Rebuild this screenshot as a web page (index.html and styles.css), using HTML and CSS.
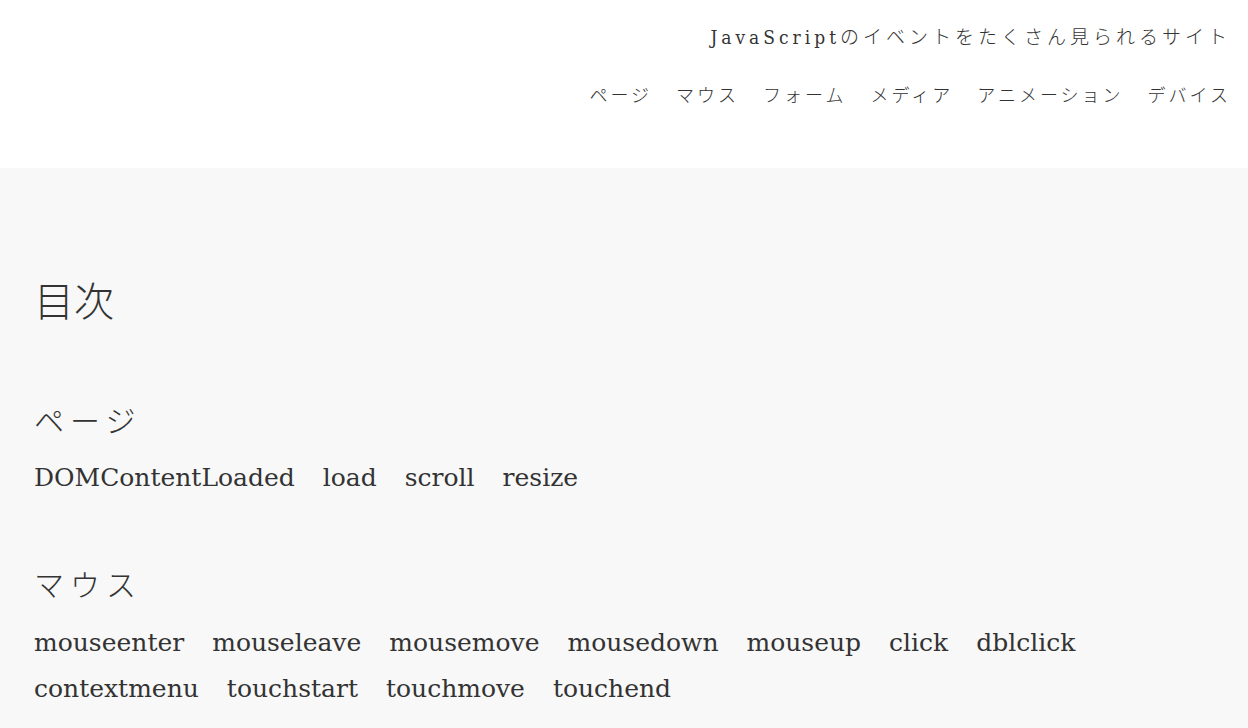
FILE: index.html
```html
<!DOCTYPE html>
<html lang="ja">
<head>
<meta charset="utf-8">
<title>JavaScriptのイベントをたくさん見られるサイト</title>
<link rel="stylesheet" href="styles.css">
</head>
<body>
<header class="site-header">
  <p class="site-title">JavaScriptのイベントをたくさん見られるサイト</p>
  <nav class="global-nav">
    <a href="#">ページ</a>
    <a href="#">マウス</a>
    <a href="#">フォーム</a>
    <a href="#">メディア</a>
    <a href="#">アニメーション</a>
    <a href="#">デバイス</a>
  </nav>
</header>
<main class="content">
  <h1 class="toc-title">目次</h1>
  <section class="toc-section">
    <h2 class="toc-heading">ページ</h2>
    <ul class="toc-list">
      <li><a href="#">DOMContentLoaded</a></li>
      <li><a href="#">load</a></li>
      <li><a href="#">scroll</a></li>
      <li><a href="#">resize</a></li>
    </ul>
  </section>
  <section class="toc-section">
    <h2 class="toc-heading">マウス</h2>
    <ul class="toc-list">
      <li><a href="#">mouseenter</a></li>
      <li><a href="#">mouseleave</a></li>
      <li><a href="#">mousemove</a></li>
      <li><a href="#">mousedown</a></li>
      <li><a href="#">mouseup</a></li>
      <li><a href="#">click</a></li>
      <li><a href="#">dblclick</a></li>
      <li><a href="#">contextmenu</a></li>
      <li><a href="#">touchstart</a></li>
      <li><a href="#">touchmove</a></li>
      <li><a href="#">touchend</a></li>
    </ul>
  </section>
</main>
</body>
</html>
```
FILE: styles.css
```css
html, body {
  margin: 0;
  padding: 0;
}
body {
  font-family: "DejaVu Serif", "Noto Sans CJK JP", serif;
  color: #333;
  background: #f8f8f8;
}
a {
  color: inherit;
  text-decoration: none;
}
.site-header {
  background: #fff;
  height: 168px;
  box-sizing: border-box;
  padding: 22px 17px 0 0;
  display: flex;
  flex-direction: column;
  align-items: flex-end;
}
.site-title {
  margin: 0;
  font-family: "DejaVu Serif Condensed", "DejaVu Serif", "Noto Sans CJK JP", serif;
  font-size: 19px;
  line-height: 30px;
  letter-spacing: 4px;
  font-weight: 300;
}
.global-nav {
  margin-top: 29px;
  display: flex;
  gap: 24px;
  font-size: 18px;
  line-height: 30px;
  letter-spacing: 3px;
  font-weight: 300;
}
.content {
  padding: 104px 34px 40px;
}
.toc-title {
  margin: 0;
  font-size: 40px;
  font-weight: 300;
  line-height: 60px;
}
.toc-section {
  margin-top: 70px;
}
.toc-section + .toc-section {
  margin-top: 65px;
}
.toc-heading {
  margin: 0;
  font-size: 30px;
  font-weight: 300;
  letter-spacing: 6px;
  line-height: 40px;
}
.toc-list {
  list-style: none;
  margin: 13px 0 0;
  padding: 0;
  display: flex;
  flex-wrap: wrap;
  column-gap: 28px;
  font-size: 25px;
  line-height: 46px;
}
.toc-section + .toc-section .toc-list {
  margin-top: 14px;
}
```
